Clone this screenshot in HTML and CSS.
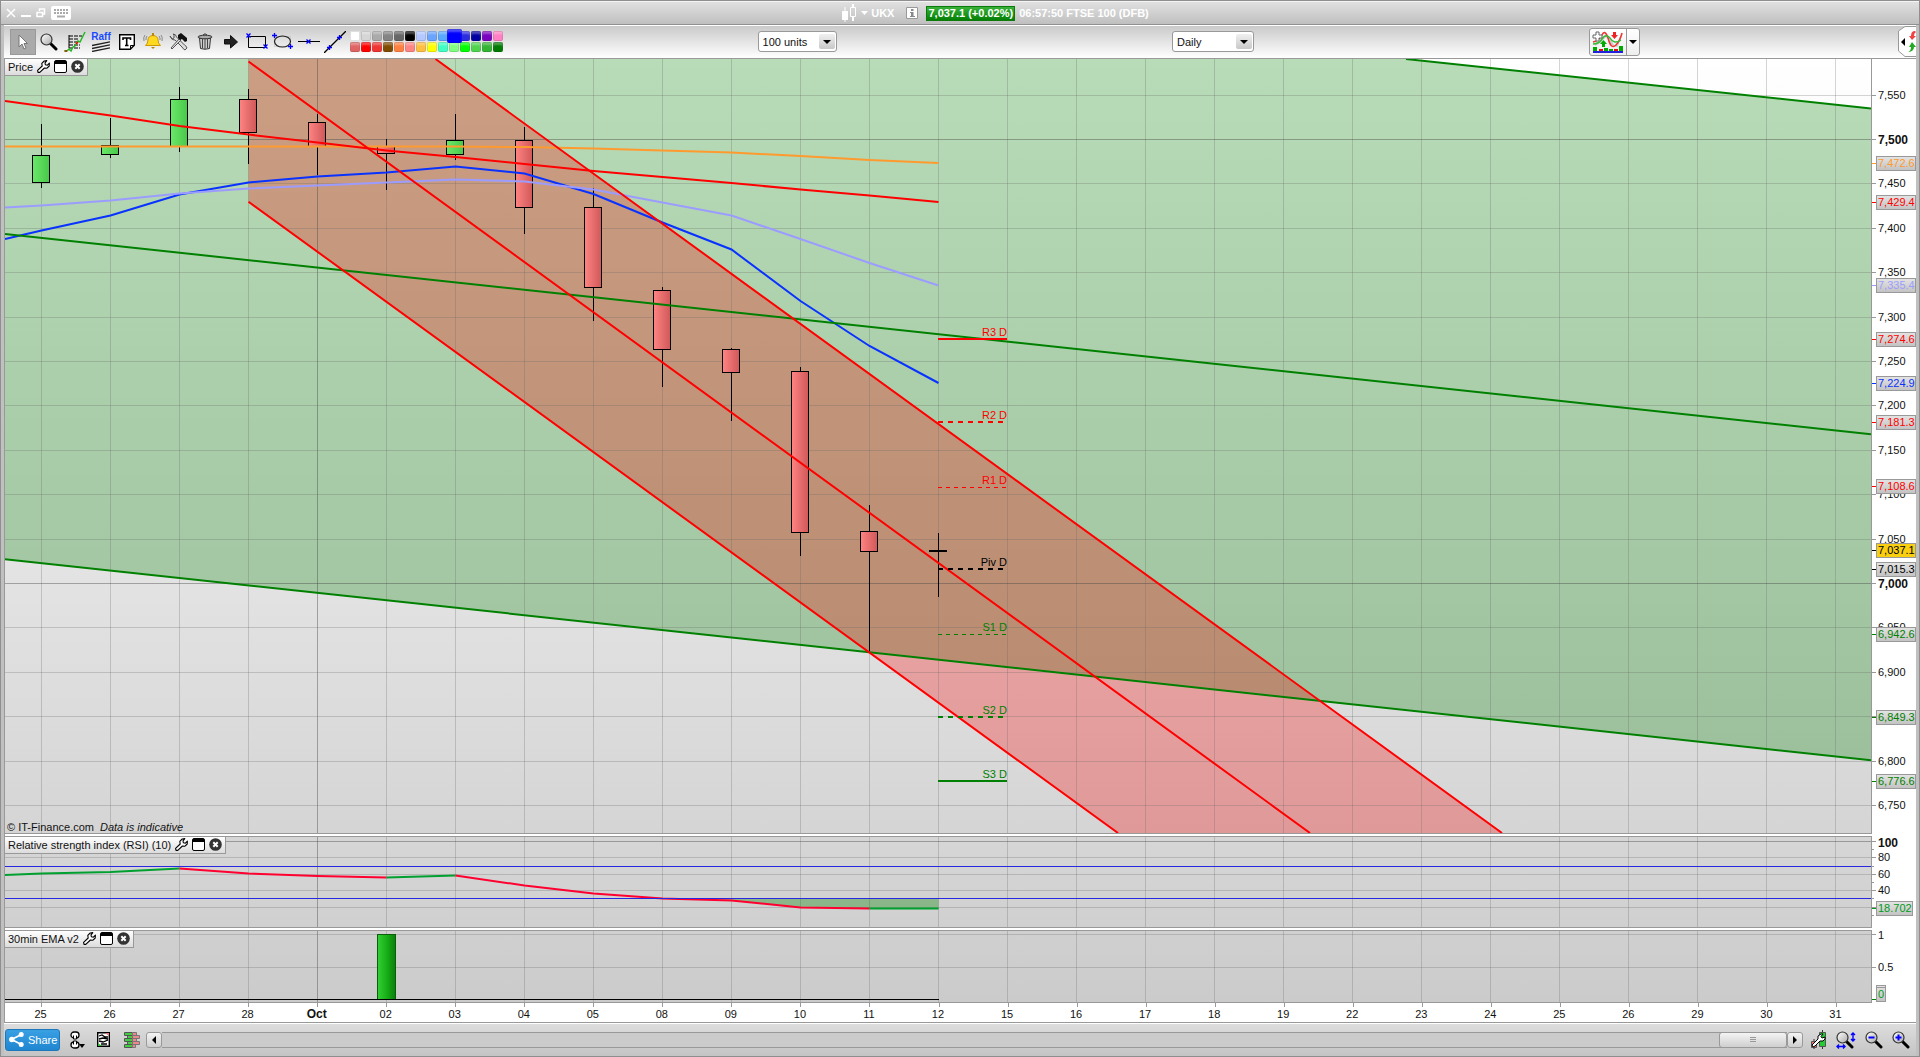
FILE: index.html
```html
<!DOCTYPE html>
<html lang="en">
<head>
<meta charset="utf-8">
<title>UKX - FTSE 100 (DFB)</title>
<link rel="stylesheet" href="styles.css">
</head>
<body>
<svg width="0" height="0" class="defs" aria-hidden="true">
  <defs>
    <linearGradient id="lens" x1="0" y1="0" x2="1" y2="1"><stop offset="0" stop-color="#fff"/><stop offset="1" stop-color="#aaa"/></linearGradient>
    <symbol id="wrench" viewBox="0 0 13 13"><path d="M1 12.4 .6 10.4 5.2 6 4.8 3.4 7.2 1 9.8.6 8 2.8 8.4 4.8 10.4 5.2 12.4 3.2 12.2 6 10 8.2 7.4 8 2.8 12.4Z" fill="#fff" stroke="#000" stroke-width="1.1" stroke-linejoin="round"/></symbol>
    <symbol id="pane" viewBox="0 0 13 13"><rect x=".5" y=".5" width="12" height="12" rx="1.5" fill="#fff" stroke="#000"/><path d="M1 1h11v3H1z"/></symbol>
    <symbol id="cross" viewBox="0 0 13 13"><circle cx="6.5" cy="6.5" r="6.3" fill="#333"/><path d="M4.3 4.3l4.4 4.4M8.7 4.3 4.3 8.7" stroke="#fff" stroke-width="2"/></symbol>
    <symbol id="zoomglass" viewBox="0 0 18 18"><path d="M10.500 10.500 16 16" stroke="#000" stroke-width="3" stroke-linecap="round"/><circle cx="6.500" cy="6.500" r="5.500" fill="url(#lens)" stroke="#333" stroke-width="1.200"/></symbol>
    <symbol id="bluex" viewBox="0 0 5 5"><path d="M.5.5l4 4M4.500.5l-4 4" stroke="#00f" stroke-width="1.300"/></symbol>
    <symbol id="plus" viewBox="0 0 5 5"><path d="M2.500 0v5M0 2.500h5" stroke="#00f" stroke-width="1.300"/></symbol>
  </defs>
</svg>
<div class="window">
  <header class="titlebar">
    <div class="window-controls">
      <button aria-label="Close"><svg width="10" height="10"><path d="M1 1l8 8M9 1 1 9" stroke="#fff" stroke-width="1.500"/></svg></button>
      <button aria-label="Minimise"><svg width="10" height="10"><path d="M0 8h10" stroke="#fff" stroke-width="2"/></svg></button>
      <button aria-label="Restore"><svg width="10" height="10"><path d="M3.500 3V1h5v5H6.500M1 4.500h5.500v4H1z" fill="none" stroke="#fff" stroke-width="1.500"/></svg></button>
      <button aria-label="Keyboard"><svg width="20" height="14"><rect width="20" height="14" rx="2" fill="#fff"/><path d="M3 4h14M3 7h14" stroke="#aaa" stroke-width="2" stroke-dasharray="2 1"/><path d="M6 10.500h8" stroke="#aaa" stroke-width="2"/></svg></button>
    </div>
    <div class="instrument">
      <svg width="16" height="18"><path d="M4 3v15" stroke="#fff"/><path d="M1 7h6v9H1z" fill="#fff"/><path d="M12 0v4M12 13v4" stroke="#fff" stroke-width="2"/><path d="M9.500 3.500h5v9h-5z" fill="none" stroke="#fff"/></svg>
      <svg width="7" height="4"><path d="M0 0h7L3.500 4z" fill="#fff"/></svg>
      <strong class="ticker">UKX</strong>
      <button class="info" aria-label="Information"><svg width="12" height="12"><path d="M.5.5h11v11H.5z" fill="#fff" stroke="#999"/><path d="M5 2h2.500v2H5zM4 5h3.500v4H9v1H4V9h1V6H4z" fill="#888"/></svg></button>
      <strong class="quote">7,037.1 (+0.02%)</strong>
      <strong class="session">06:57:50 FTSE 100 (DFB)</strong>
    </div>
  </header>

  <div class="toolbar">
    <div class="tools">
      <button class="tool active" aria-label="Select"><svg width="10" height="16"><path d="M1 1v12l3-3 2 5 2-1-2-4.500h3.500z" fill="#fff" stroke="#777"/></svg></button>
      <button class="tool" aria-label="Zoom"><svg width="18" height="18"><use href="#zoomglass"/></svg></button>
      <button class="tool" aria-label="Draw on chart"><svg width="22" height="22"><path d="M5 5h13M5 8h9M5 11h8M5 14h11M5 17h11" stroke="#000" stroke-width="1.200" stroke-dasharray="4 1"/><path d="M5 4v13" stroke="#000"/><path d="M0 20h3l2-2 2 2 2-4 2-1 3-5 2 1 5-10" fill="none" stroke="#2b2" stroke-width="1.500"/><path d="M1 20h2M12 13l2-2" stroke="#f00" stroke-width="1.500"/></svg></button>
      <button class="tool raff" aria-label="Raff regression"><span>Raff</span><svg width="18" height="11"><path d="M0 4.500 18 .8M0 7.500 18 3.800M0 10.500 18 6.800" stroke="#222" stroke-width="1.300"/></svg></button>
      <button class="tool text-tool" aria-label="Text"><svg width="16" height="16"><path d="M.7.7h14.600v10.600l-4 4H.7z" fill="#fff" stroke="#000" stroke-width="1.400"/><path d="M11.500 15v-3.500H15" fill="none" stroke="#000"/><path d="M4 6V4h7.500v2M7.700 4v7.500M6 11.500h3.500" fill="none" stroke="#000" stroke-width="1.600"/></svg></button>
      <button class="tool" aria-label="Alert"><svg width="20" height="18"><path d="M2.500 12.500q2.500-2 2.500-5.500 0-4 5-4.500 5 .5 5 4.500 0 3.500 2.500 5.500z" fill="#ffd820" stroke="#c90"/><path d="M10 0v3" stroke="#b80" stroke-width="2"/><path d="M8 14h4l-2 2z" fill="#b80"/><path d="M2 2Q0 4.500 1 8M4 3Q2.500 5 3 7M18 2q2 2.500 1 6M16 3q1.500 2 1 4" fill="none" stroke="#888"/></svg></button>
      <button class="tool" aria-label="Settings"><svg width="20" height="18"><path d="M1 3l2 3 2-1V2L4 1q3 0 3.500 3l8 8q2 1 2.500 3l-2 2q-2-1-3-3L6 7Q3 8 1 3z" fill="#ddd" stroke="#555"/><path d="M12 7 3 16l-1-1 8-9z" fill="#ddd" stroke="#555"/><path d="M9 2l3-2 6 5v3l-2 1-3-3-2 1-2-2z" fill="#111"/></svg></button>
      <button class="tool" aria-label="Delete"><svg width="16" height="17"><path d="M2.500 5l1 10.500q4.500 1.500 9 0L13.500 5z" fill="#ccc" stroke="#333"/><path d="M5.500 6v9M8 6v10M10.500 6v9" stroke="#444"/><ellipse cx="8" cy="4" rx="7" ry="1.800" fill="#aaa" stroke="#333"/><path d="M6 2q2-2.500 4 0" fill="none" stroke="#333"/></svg></button>
      <button class="tool" aria-label="Arrow"><svg width="14" height="14"><path d="M.5 4.500h6v-4l7 6.500-7 6v-4h-6z" fill="#222" stroke="#111"/></svg></button>
      <button class="tool" aria-label="Rectangle"><svg width="22" height="17"><path d="M2.500 3.500h17v11h-17z" fill="none" stroke="#000"/><use href="#bluex" width="5" height="5"/><use href="#bluex" x="17" y="11" width="5" height="5"/></svg></button>
      <button class="tool" aria-label="Ellipse"><svg width="22" height="17"><path d="M2.500 3.500h16v10h-16z" fill="none" stroke="#bbb" stroke-dasharray="1 1"/><ellipse cx="10.500" cy="8.500" rx="8" ry="5.500" fill="none" stroke="#222" stroke-width="1.200"/><use href="#plus" width="5" height="5"/><use href="#plus" x="16" y="11" width="5" height="5"/></svg></button>
      <button class="tool" aria-label="Horizontal line"><svg width="22" height="7"><path d="M0 3.500h22" stroke="#000"/><use href="#bluex" x="8" y="1" width="5" height="5"/></svg></button>
      <button class="tool" aria-label="Trend line"><svg width="22" height="22"><path d="M0 22 22 0" stroke="#000" stroke-width="1.300"/><use href="#plus" x="3" y="14" width="5" height="5"/><use href="#plus" x="13" y="4" width="5" height="5"/></svg></button>
      <div class="palette" id="palette"></div>
    </div>
    <div class="picker units"><select aria-label="Number of units"><option>100 units</option></select></div>
    <div class="picker period"><select aria-label="Time frame"><option>Daily</option></select></div>
    <div class="indicators">
      <button aria-label="Add indicator"><svg width="32" height="22"><path d="M3 12q4 0 7-5 3-6 6 0 5 14 10 3 2-5 5-8l-5 13q-2 3-5-3-3-8-8-5-5 6-10 8z" fill="#ccc"/><path d="M1 11q6-1 9-7t6 3q3 12 8 7 4-4 6-12" fill="none" stroke="#e33" stroke-width="1.500"/><path d="M1 13q6 0 9-5 4-6 8-1 4 7 11 2" fill="none" stroke="#3b3" stroke-width="1.500"/><path d="M4 1h3v3h3v3H7v3H4V7H1V4h3z" fill="#fff" stroke="#666"/><path d="M10 16v-3H8l3.500-4L15 13h-2v3z" fill="#0a0"/><path d="M21 1h3v3h2l-3.500 4L19 4h2z" fill="#e22"/><path d="M1 16h4v4H1zM12 17h4v3h-4zM17 18h4v2h-4zM27 15h4v5h-4z" fill="#0a0"/><path d="M7 18h4v2H7zM22 18h4v2h-4z" fill="#d11"/><path d="M1 21h30" stroke="#22d" stroke-width="2"/></svg></button>
      <button aria-label="Indicator list"><svg width="8" height="4"><path d="M0 0h8L4 4z"/></svg></button>
    </div>
    <button class="side-tab" aria-label="Open order panel"><svg width="18" height="31"><path d="M18 .5H7L.5 5v20L7 30.500h11" fill="#fff" stroke="#999"/><path d="M3 16l4-4v8z"/><path d="M17 5q-4 0-4 5h-2l3 4 4-4h-2q0-3 2-4z" fill="#e44"/><path d="M9 26q4 0 4-5h-2l3-5 4 5h-2q0 5-7 5z" fill="#2a2"/></svg></button>
  </div>

  <main class="charts">
    <section class="plot price" aria-label="Price">
      <div class="tab"><span>Price</span>
        <button aria-label="Price settings"><svg width="13" height="13"><use href="#wrench"/></svg></button>
        <button aria-label="Maximise price"><svg width="13" height="13"><use href="#pane"/></svg></button>
        <button aria-label="Close price"><svg width="13" height="13"><use href="#cross"/></svg></button></div>
      <svg id="price"></svg>
      <p class="credit"><span>© IT-Finance.com</span><em>Data is indicative</em></p>
    </section>
    <div class="axis price-axis"><svg id="price-axis"></svg></div>
    <section class="plot sub" aria-label="Relative strength index">
      <div class="tab"><span>Relative strength index (RSI) (10)</span>
        <button aria-label="RSI settings"><svg width="13" height="13"><use href="#wrench"/></svg></button>
        <button aria-label="Maximise RSI"><svg width="13" height="13"><use href="#pane"/></svg></button>
        <button aria-label="Close RSI"><svg width="13" height="13"><use href="#cross"/></svg></button></div>
      <svg id="rsi"></svg>
    </section>
    <div class="axis"><svg id="rsi-axis"></svg></div>
    <section class="plot sub ema" aria-label="30min EMA v2">
      <div class="tab"><span>30min EMA v2</span>
        <button aria-label="EMA settings"><svg width="13" height="13"><use href="#wrench"/></svg></button>
        <button aria-label="Maximise EMA"><svg width="13" height="13"><use href="#pane"/></svg></button>
        <button aria-label="Close EMA"><svg width="13" height="13"><use href="#cross"/></svg></button></div>
      <svg id="ema"></svg>
    </section>
    <div class="axis"><svg id="ema-axis"></svg></div>
    <div class="dates"><svg id="dates"></svg></div>
  </main>

  <footer class="bottombar">
    <button class="share"><svg width="15" height="15"><path d="M12.500 2.500 2.500 7.500l10 5" fill="none" stroke="#fff" stroke-width="1.800"/><circle cx="12.200" cy="2.600" r="2.500" fill="#fff"/><circle cx="2.800" cy="7.500" r="2.700" fill="#fff"/><circle cx="12.200" cy="12.400" r="2.500" fill="#fff"/></svg>Share</button>
    <button class="link" aria-label="Link windows"><svg width="16" height="18"><rect x="1" y="1" width="8" height="6" rx="3" fill="#fff" stroke="#000" stroke-width="1.300"/><rect x="1" y="11" width="8" height="6" rx="3" fill="#fff" stroke="#000" stroke-width="1.300"/><path d="M3.500 4.500v3.500h3V4.500M3.500 13.500V10h3v3.500" fill="#fff" stroke="#000"/><path d="M9 13h6l-3 4z"/></svg></button>
    <button class="notes" aria-label="Notes"><svg width="13" height="15"><path d="M.7.7h11.600v13.600H.7z" fill="#fff" stroke="#000" stroke-width="1.400"/><path d="M2 4l3-1 3 2h3M2 7l4-1 5 1M2 9l4 1 5-2M4 12h6" fill="none" stroke="#000" stroke-width="1.300"/><path d="M8 1h4v3z" fill="#e77"/><path d="M1 11v3h4z" fill="#3b3"/></svg></button>
    <button class="book" aria-label="Order book"><svg width="17" height="16"><path d="M.5.5h8v3h-8zM3.500 3.500h5v3h-5zM.5 6.500h8v3h-8zM3.500 9.500h5v3h-5zM.5 12.500h8v3h-8z" fill="#4c4" stroke="#555"/><path d="M8.500.5h4v3h-4zM8.500 3.500h7v3h-7zM8.500 6.500h4v3h-4zM8.500 9.500h7v3h-7zM8.500 12.500h3v3h-3z" fill="#e88" stroke="#777"/></svg></button>
    <div class="scroll">
      <button class="arrow" aria-label="Scroll left"><svg width="4" height="8"><path d="M4 0v8L0 4z"/></svg></button>
      <div class="track"><button class="thumb" aria-label="Scroll position"><svg width="6" height="6"><path d="M0 .5h6M0 2.500h6M0 4.500h6" stroke="#999"/></svg></button></div>
      <button class="arrow" aria-label="Scroll right"><svg width="4" height="8"><path d="M0 0v8l4-4z"/></svg></button>
    </div>
    <div class="zooms">
      <button aria-label="Chart style"><svg width="16" height="20"><path d="M3 9v10M11.500 0v19" stroke="#333"/><path d="M.5 11.500h5v6h-5z" fill="#e66" stroke="#555"/><path d="M8.500 2.500h6v14h-6z" fill="#2c3" stroke="#555"/><path d="M2 17 1 15l6-6V6l3-2h2l-2 2.500 1 1.500 3-1v2l-2 2H9l-5 5z" fill="#fff" stroke="#000"/></svg></button>
      <button aria-label="Fit to window"><svg width="20" height="18"><use href="#zoomglass" width="18" height="18"/><path d="M17 2v8M15 4l2-2 2 2M15 8l2 2 2-2M1 15.500h8M3 13.500l-2 2 2 2M7 13.500l2 2-2 2" fill="none" stroke="#00f" stroke-width="1.400"/></svg></button>
      <button aria-label="Zoom out"><svg width="18" height="18"><use href="#zoomglass"/><path d="M3.500 6.500h6" stroke="#00f" stroke-width="2"/></svg></button>
      <button aria-label="Zoom in"><svg width="18" height="18"><use href="#zoomglass"/><path d="M3.500 6.500h6M6.500 3.500v6" stroke="#00f" stroke-width="2"/></svg></button>
    </div>
  </footer>
</div>
<script src="chart.js"></script>
</body>
</html>
```
FILE: styles.css
```css
* { box-sizing: border-box; }

body {
  margin: 0;
  font: 11px/14px "Liberation Sans", Arial, sans-serif;
  color: #111;
}

button {
  margin: 0;
  padding: 0;
  border: 0;
  background: none;
  color: inherit;
  font: inherit;
}

svg { display: block; flex: none; }
.defs { position: absolute; }

.window {
  display: flex;
  flex-direction: column;
  height: 100vh;
  min-height: 480px;
  border: 1px solid #8f8f8f;
  background: #c0c0c0;
}

/* Title bar */
.titlebar {
  display: flex;
  align-items: center;
  height: 24px;
  padding-left: 5px;
  border-top: 1px solid #f4f4f4;
  border-bottom: 1px solid #909090;
  background: linear-gradient(#e0e0e0, #bfbfbf);
}
.window-controls { display: flex; align-items: center; gap: 5px; }
.instrument {
  flex: 1;
  display: flex;
  justify-content: center;
  align-items: center;
  gap: 4px;
  color: #fff;
}
.ticker { margin-left: -1px; }
.info { margin: 0 4px 0 8px; }
.quote {
  padding: 0 1px;
  border: 1px solid #0a7a0a;
  background: linear-gradient(#38b238, #058005);
  line-height: 13px;
}

/* Toolbar */
.toolbar {
  display: grid;
  grid-template-columns: auto 254fr auto 336fr auto 336fr auto 258fr auto;
  align-items: center;
  height: 34px;
  margin: 0 3px;
  padding: 0 0 1px 6px;
  border-top: 1px solid #fff;
  border-bottom: 1px solid #999;
  background: linear-gradient(#cacaca, #fff);
}
.tools { display: flex; align-items: center; }
.tool {
  display: flex;
  justify-content: center;
  align-items: center;
  width: 26px;
  height: 26px;
}
.tool.active { background: #aaa; border: 1px solid #999; }
.tool.raff { flex-direction: column; color: #1a4aff; font-weight: bold; line-height: 9px; font-size: 10px; }
.palette {
  display: grid;
  grid-template-columns: repeat(14, 11px);
  grid-auto-rows: 11px;
  margin-left: 2px;
}
.swatch {
  width: 10px;
  height: 10px;
  border-radius: 2px;
  box-shadow: inset 0 0 0 1px rgba(0, 0, 0, .12), inset 0 3px 2px rgba(255, 255, 255, .3);
}
.swatch.chosen { width: 15px; height: 14px; margin: -2px; z-index: 1; }
.units { grid-column: 3; width: 79px; }
.period { grid-column: 5; width: 82px; }
.indicators { grid-column: 7; }
.side-tab { grid-column: 9; }

.picker { position: relative; }
.picker select {
  display: block;
  width: 100%;
  height: 21px;
  padding: 0 4px;
  border: 1px solid #999;
  border-radius: 3px;
  background: #fff;
  color: #111;
  font: inherit;
  appearance: none;
}
.picker::before {
  content: "";
  position: absolute;
  right: 2px;
  top: 3px;
  width: 16px;
  height: 15px;
  border-radius: 2px;
  background: linear-gradient(#f0f0f0, #c8c8c8);
}
.picker::after {
  content: "";
  position: absolute;
  right: 6px;
  top: 9px;
  border: 4px solid transparent;
  border-top-color: #000;
  border-bottom: 0;
}
.indicators {
  display: flex;
  height: 28px;
  border: 1px solid #999;
  border-radius: 3px;
  background: linear-gradient(#fff, #eee);
}
.indicators button { display: flex; align-items: center; padding: 0 2px; }
.indicators button + button { padding: 0 2px; border-left: 1px solid #999; }

/* Charts */
.charts {
  flex: 1;
  min-height: 0;
  display: grid;
  grid-template-columns: minmax(0, 1fr) 44px;
  grid-template-rows: minmax(0, 1fr) 94px 75px 19px;
  margin: 0 3px;
  border-left: 1px solid #999;
  background: #fff;
}
.plot {
  position: relative;
  min-height: 0;
  border: solid #999;
  border-width: 0 1px 1px 0;
  background: linear-gradient(#fff, #d5d5d5);
}
.plot.sub {
  margin-top: 2px;
  border-top-width: 1px;
  background: linear-gradient(#d6d6d6, #d0d0d0);
}
.plot.ema { background: linear-gradient(#d0d0d0, #cbcbcb); }
.plot > svg, .axis > svg, .dates > svg { width: 100%; height: 100%; }
.axis { min-height: 0; padding: 3px 0 1px; }
.axis.price-axis { padding: 0 0 1px; }
.axis > svg { overflow: visible; }
.dates { grid-column: 1 / -1; padding-right: 44px; }
.dates > svg { overflow: visible; }

.tab {
  position: absolute;
  top: 0;
  left: 0;
  display: flex;
  align-items: center;
  gap: 4px;
  height: 17px;
  padding: 0 3px 1px;
  border: solid #999;
  border-width: 0 1px 1px 0;
  background: linear-gradient(#fff, #dcdcdc);
}
.credit {
  position: absolute;
  left: 2px;
  bottom: -1px;
  display: flex;
  gap: 6px;
  margin: 0;
}

/* Drawing styles shared by the chart script */
.vector * { vector-effect: non-scaling-stroke; }
.grid { stroke: rgba(100, 100, 100, .27); shape-rendering: crispEdges; }
.grid.major { stroke: rgba(70, 70, 70, .42); }
.crisp { shape-rendering: crispEdges; }
.line { fill: none; stroke-width: 2; }
text { font-size: 11px; fill: #111; }
text.major { font-size: 12px; font-weight: bold; }

/* Bottom bar */
.bottombar {
  display: flex;
  align-items: center;
  height: 34px;
  margin: 0 3px;
  border-top: 1px solid #999;
  box-shadow: inset 0 1px #fff;
  background: linear-gradient(#dedede, #c4c4c4);
}
.share {
  display: flex;
  align-items: center;
  gap: 4px;
  width: 55px;
  height: 22px;
  margin-left: 1px;
  padding-left: 3px;
  border: 1px solid #1c78b8;
  border-radius: 3px;
  background: linear-gradient(#3aa0e4, #1f86d0);
  color: #fff;
}
.link { margin-left: 10px; }
.notes { margin-left: 11px; }
.book { margin-left: 14px; }
.scroll { flex: 1; display: flex; margin: 0 8px 0 5px; }
.arrow, .thumb {
  display: flex;
  justify-content: center;
  align-items: center;
  width: 16px;
  height: 16px;
  border: 1px solid #999;
  border-radius: 3px;
  background: linear-gradient(#f4f4f4, #cfcfcf);
}
.track {
  flex: 1;
  display: flex;
  justify-content: flex-end;
  height: 16px;
  border: solid #999;
  border-width: 1px 0;
  background: #cbcbcb;
}
.thumb { width: 68px; margin: -1px 0; }
.zooms { display: flex; align-items: center; gap: 9px; margin-right: 6px; }
```
FILE: chart.js
```javascript
const NS = 'http://www.w3.org/2000/svg';
function el(parent, name, attrs, text) {
  const node = document.createElementNS(NS, name);
  for (const key in attrs) node.setAttribute(key, attrs[key]);
  if (text !== undefined) node.textContent = text;
  parent.appendChild(node);
  return node;
}

// Drawing units: every plot shares the x range, each has its own y range.
const LEFT = 5, WIDTH = 1866;
const day = i => 41.5 + 69 * i;
const frame = (id, top, height) => {
  const root = document.getElementById(id);
  const view = el(root, 'svg', { class: 'vector', width: '100%', height: '100%', preserveAspectRatio: 'none', viewBox: `${LEFT} ${top} ${WIDTH} ${height}` });
  return { root, view, px: x => (x - LEFT) / WIDTH * 100 + '%', py: y => (y - top) / height * 100 + '%' };
};
const gradient = (view, id, stops) => {
  const g = el(view, 'linearGradient', { id });
  stops.forEach((c, i) => el(g, 'stop', { offset: i / (stops.length - 1), 'stop-color': c }));
};
const verticals = (view, top, height) => {
  for (let i = 0; i < 27; i++) el(view, 'path', { class: i === 4 ? 'grid major' : 'grid', d: `M${day(i)} ${top}v${height}` });
};
const horizontal = (view, y, major) => el(view, 'path', { class: major ? 'grid major' : 'grid', d: `M${LEFT} ${y}h${WIDTH}` });
const polyline = (view, xs, ys, stroke) => el(view, 'polyline', { class: 'line', stroke, points: xs.map((x, i) => x + ',' + ys[i]).join(' ') });

// Axis marks
function tick(root, y, color, length) {
  const holder = el(root, 'svg', { y, overflow: 'visible' });
  el(holder, 'path', { class: 'crisp', d: `M0 .5h${length || 4}`, stroke: color || '#999' });
}
function axisLabel(root, y, text, major) {
  el(root, 'text', { x: 6, y, dy: major ? 5 : 4, class: major ? 'major' : '' }, text);
}
function badge(root, y, text, color, width, fill) {
  tick(root, y, color);
  const g = el(root, 'svg', { y, overflow: 'visible' });
  el(g, 'rect', { class: 'crisp', x: 4.5, y: -6.5, width: width - 1, height: 14, fill: fill || 'url(#badge)', stroke: '#999' });
  el(g, 'text', { x: 6, y: 4, style: `fill:${color}` }, text);
}

// Palette
const colours = ['#fff', '#d6d6d6', '#aaa', '#848484', '#666', '#000', '#b4c8ff', '#6aa4ff', '#58a8ff', '#00f', '#2c2ce0', '#0000a0', '#7a00c0', '#ff80c4',
  '#e06464', '#f00', '#f03434', '#804a00', '#ff8040', '#ff8484', '#ffc040', '#ff0', '#40ffc4', '#80ff80', '#0f0', '#50d450', '#34b434', '#007a00'];
colours.forEach(c => {
  const b = document.createElement('button');
  b.className = c === '#00f' ? 'swatch chosen' : 'swatch';
  b.style.background = c;
  b.setAttribute('aria-label', 'Colour ' + c);
  document.getElementById('palette').appendChild(b);
});

// Price
{
  const { root, view, px, py } = frame('price', 59, 774);
  const axis = document.getElementById('price-axis');
  const value = p => 139.4 + (7500 - p) * 0.888;
  const snap = y => Math.floor(y) + 0.5;
  gradient(view, 'up', ['#6ae86a', '#48c848']);
  gradient(view, 'down', ['#ff8484', '#d05858']);
  const badgeFill = el(axis, 'linearGradient', { id: 'badge', x2: 0, y2: 1 });
  el(badgeFill, 'stop', { offset: 0, 'stop-color': '#e4e4e4' });
  el(badgeFill, 'stop', { offset: 1, 'stop-color': '#c2c2c2' });

  el(view, 'path', { fill: 'rgba(0,128,0,.28)', d: 'M5 59H1406L1871 108.500V760.200L5 559.200z' });
  el(view, 'path', { fill: 'rgba(255,0,0,.28)', d: 'M248.500 59H435.500L1501 833H1118L248.500 201.700z' });
  verticals(view, 59, 774);
  for (let p = 6750; p <= 7550; p += 50) {
    const y = snap(value(p));
    horizontal(view, y, p % 500 === 0);
    tick(axis, py(y - 0.5));
    // The S2 badge sits on the 6,850 mark and takes its place.
    if (p !== 6850) axisLabel(axis, py(y - 0.5), p.toLocaleString('en-US'), p % 500 === 0);
  }

  // high, body top, body bottom, low, direction
  [[124, 155, 182, 188, 'up'], [118, 145, 154, 158, 'up'], [87, 99, 146, 152, 'up'], [89, 99, 132, 164, 'down'],
   [114, 122, 146, 175, 'down'], [139, 146, 153, 190, 'down'], [114, 140, 154, 160, 'up'], [127, 140, 207, 234, 'down'],
   [188, 207, 287, 321, 'down'], [287, 290, 349, 387, 'down'], [348, 349, 372, 421, 'down'], [367, 371, 532, 556, 'down'],
   [505, 531, 551, 652, 'down']].forEach(([high, top, bottom, low, dir], i) => {
    el(view, 'path', { class: 'crisp', stroke: '#000', d: `M${day(i)} ${high}V${low}` });
    el(view, 'rect', { class: 'crisp', x: day(i) - 9, y: top + 0.5, width: 17, height: bottom - top, fill: `url(#${dir})`, stroke: '#000' });
  });
  el(view, 'path', { class: 'crisp', stroke: '#000', d: 'M938.500 533V597' });
  el(view, 'path', { class: 'crisp', stroke: '#000', 'stroke-width': 2, d: 'M929 551H947' });

  const xs = [5, ...Array.from({ length: 14 }, (_, i) => day(i))];
  polyline(view, xs, [146.5, 146.5, 146.5, 146.5, 146.5, 146.5, 146.5, 146.5, 147, 148.5, 150.5, 152.5, 156, 160, 163], '#ff9a2e');
  polyline(view, xs, [101, 106, 115.5, 126, 134.5, 142.5, 150.5, 157, 164, 171, 177, 183, 189.5, 195.5, 202], '#f00');
  polyline(view, xs, [239, 230.5, 215.5, 194.5, 182.5, 176.5, 172.5, 166.5, 173.5, 194, 222.5, 249.5, 301, 346, 383], '#0a32ff');
  polyline(view, xs, [207.5, 205.5, 200.5, 193.5, 188.5, 185.5, 182.5, 179.5, 181.5, 189.5, 202.5, 215.5, 239, 263, 285.5], '#9c9cff');

  el(view, 'path', { class: 'line', stroke: '#008000', d: 'M1406 59 1871 108.500M5 234 1871 434.200M5 559.200 1871 760.200' });
  el(view, 'path', { class: 'line', stroke: '#f00', d: 'M435.500 59 1502 833M248.500 61.500 1310 833M248.500 201.700 1118 833' });

  [['R3 D', 339, '#f00', 2, ''], ['R2 D', 422, '#f00', 2, '5 5'], ['R1 D', 487.5, '#f00', 1, '4 4'], ['Piv D', 569, '#000', 2, '5 5'],
   ['S1 D', 634.5, '#008000', 1, '4 4'], ['S2 D', 717, '#008000', 2, '5 5'], ['S3 D', 781, '#008000', 2, '']].forEach(([name, y, color, width, dash]) => {
    el(view, 'path', { class: 'crisp', stroke: color, 'stroke-width': width, 'stroke-dasharray': dash, d: `M938 ${y}h69` });
    el(root, 'text', { x: px(1007), y: py(Math.floor(y)), dy: -3, 'text-anchor': 'end', style: `fill:${color}` }, name);
  });

  [[7472.6, '#ff9a2e'], [7429.4, '#f00'], [7335.4, '#9c9cff'], [7274.6, '#f00'], [7224.9, '#0a32ff'], [7181.3, '#f00'], [7108.6, '#f00'],
   [7037.1, '#000', '#f9cf10'], [7015.3, '#000'], [6942.6, '#008000'], [6849.3, '#008000'], [6776.6, '#008000']].forEach(([p, color, fill]) => {
    badge(axis, py(Math.floor(value(p))), p.toLocaleString('en-US'), color, 40, fill);
  });
}

// Relative strength index
{
  const { view, py } = frame('rsi', 837, 90);
  const axis = document.getElementById('rsi-axis');
  verticals(view, 837, 90);
  [[100, 841.5], [80, 857.5], [60, 874.5], [40, 890.5], [20, 907.5]].forEach(([v, y]) => {
    horizontal(view, y, v === 100);
    tick(axis, py(y - 0.5));
    if (v > 20) axisLabel(axis, py(v === 100 ? y + 0.5 : y - 0.5), v, v === 100);
  });
  [849, 866, 882, 898, 915].forEach(y => tick(axis, py(y), '#999', 2));
  el(view, 'path', { fill: 'rgba(0,128,0,.34)', d: 'M662 898H938.500V909H869L800 907.500 731 900.500z' });
  const rsi = [875, 873.5, 872, 868.5, 873.5, 876, 877.5, 875.5, 885.5, 893.5, 898.5, 900.5, 907.5, 908.5, 908.5];
  const xs = [5, ...rsi.slice(1).map((_, i) => day(i))];
  [[0, 4, '#00a030'], [3, 7, '#ff0030'], [6, 8, '#00a030'], [7, 14, '#ff0030'], [13, 15, '#00a030']].forEach(([a, b, c]) => {
    polyline(view, xs.slice(a, b), rsi.slice(a, b), c);
  });
  el(view, 'path', { class: 'crisp', stroke: '#2828e0', d: 'M5 866.500H1871M5 898.500H1871' });
  badge(axis, py(908), '18.702', '#009a20', 37);
}

// 30min EMA v2
{
  const { view, py } = frame('ema', 931, 71);
  const axis = document.getElementById('ema-axis');
  verticals(view, 931, 71);
  gradient(view, 'bar', ['#34d034', '#18b018', '#0a800a']);
  [['1', 934.5], ['0.5', 967.5]].forEach(([label, y]) => {
    horizontal(view, y);
    tick(axis, py(y - 0.5));
    axisLabel(axis, py(label === '1' ? y + 0.5 : y - 0.5), label);
  });
  el(view, 'rect', { class: 'crisp', x: 377.5, y: 934.5, width: 18, height: 65, fill: 'url(#bar)', stroke: '#0a600a' });
  el(view, 'path', { class: 'crisp', stroke: '#000', d: 'M5 999.500H939' });
  tick(axis, py(999), '#008000');
  const zero = el(axis, 'svg', { y: py(993), overflow: 'visible' });
  el(zero, 'rect', { class: 'crisp', x: 4.5, y: -7.5, width: 9, height: 16, fill: 'url(#badge)', stroke: '#999' });
  el(zero, 'path', { class: 'crisp', d: 'M5 -5.500h9', stroke: '#999' });
  el(zero, 'text', { x: 6, y: 5, style: 'fill:#009a20' }, '0');
}

// Dates
{
  const { root, view, px } = frame('dates', 0, 19);
  ['25', '26', '27', '28', 'Oct', '02', '03', '04', '05', '08', '09', '10', '11', '12', '15', '16', '17', '18', '19', '22', '23', '24', '25', '26', '29', '30', '31'].forEach((label, i) => {
    el(view, 'path', { class: 'crisp', stroke: '#999', d: `M${day(i)} 0v4` });
    el(root, 'text', { x: px(day(i) - 1), y: 15, 'text-anchor': 'middle', class: label === 'Oct' ? 'major' : '' }, label);
  });
}
```
